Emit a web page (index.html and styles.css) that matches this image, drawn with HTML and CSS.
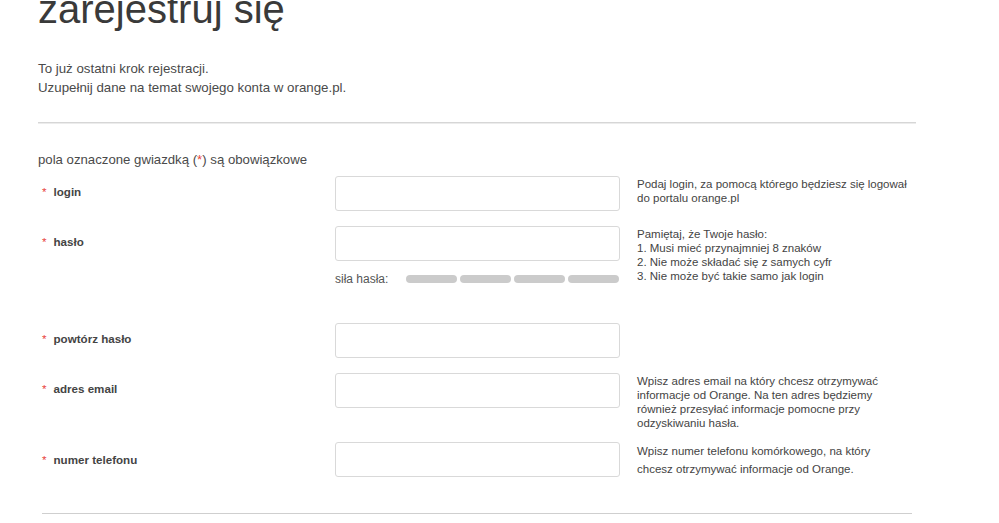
FILE: index.html
```html
<!DOCTYPE html>
<html lang="pl">
<head>
  <meta charset="UTF-8" />
  <meta name="viewport" content="width=device-width,initial-scale=1" />
  <title>Zarejestruj się - orange.pl</title>
  <link rel="stylesheet" href="styles.css">
</head>
<body>
  <div class="container">
    <!-- naglowek -->
    <h1>zarejestruj się</h1>
    <p class="intro">To już ostatni krok rejestracji.<br>Uzupełnij dane na temat swojego konta w orange.pl.</p>
    <hr class="sep">

    <!-- formularz -->
    <form class="reg-form" onsubmit="event.preventDefault();">
      <p class="required-info">pola oznaczone gwiazdką (<span class="star">*</span>) są obowiązkowe</p>

      <div class="row">
        <label class="lbl" for="login"><span class="star">*</span>login</label>
        <div class="field"><input type="text" id="login"></div>
        <div class="help">Podaj login, za pomocą którego będziesz się logował do portalu orange.pl</div>
      </div>

      <div class="row row-pass">
        <label class="lbl" for="pass"><span class="star">*</span>hasło</label>
        <div class="field">
          <input type="password" id="pass">
          <div class="strength">
            <span class="strength-lbl">siła hasła:</span>
            <span class="bars"><i></i><i></i><i></i><i></i></span>
          </div>
        </div>
        <div class="help">Pamiętaj, że Twoje hasło:<br>1. Musi mieć przynajmniej 8 znaków<br>2. Nie może składać się z samych cyfr<br>3. Nie może być takie samo jak login</div>
      </div>

      <div class="row">
        <label class="lbl" for="pass2"><span class="star">*</span>powtórz hasło</label>
        <div class="field"><input type="password" id="pass2"></div>
        <div class="help"></div>
      </div>

      <div class="row row-email">
        <label class="lbl" for="email"><span class="star">*</span>adres email</label>
        <div class="field"><input type="text" id="email"></div>
        <div class="help">Wpisz adres email na który chcesz otrzymywać informacje od Orange. Na ten adres będziemy również przesyłać informacje pomocne przy odzyskiwaniu hasła.</div>
      </div>

      <div class="row row-last">
        <label class="lbl lbl-phone" for="phone"><span class="star">*</span>numer telefonu</label>
        <div class="field"><input type="text" id="phone"></div>
        <div class="help help-tall">Wpisz numer telefonu komórkowego, na który chcesz otrzymywać informacje od Orange.</div>
      </div>
    </form>
    <hr class="sep-bottom">
  </div>
</body>
</html>
```

FILE: styles.css
```css
body { font-family: Arial, 'Liberation Sans', sans-serif; margin: 0; background: #fff; color: #4a4a4a; }
.container { width: 878px; padding-left: 38px; }
h1 { font-size: 40px; font-weight: normal; color: #3a3a3a; margin: -14px 0 0 0; line-height: 46px; }
.intro { font-size: 13.3px; line-height: 19px; margin: 27px 0 0 0; color: #4a4a4a; }
.sep { border: none; border-top: 1px solid #d6d6d6; border-bottom: 1px solid #ececec; margin: 25px 0 0 0; height: 0; }
.required-info { font-size: 13.2px; line-height: 19px; margin: 26px 0 7px 0; }
.star { color: #e8453c; }
.row { display: grid; grid-template-columns: 280px 285px 271px; column-gap: 17px; align-items: start; margin-bottom: 15px; }
.row-pass { margin-bottom: 37px; }
.row-email { margin-bottom: 12px; }
.row-last { margin-bottom: 35px; }
.lbl { font-size: 11.6px; font-weight: bold; line-height: 32px; color: #444; padding-left: 4px; }
.lbl .star { font-weight: normal; margin-right: 7px; }
.lbl-phone { line-height: 36px; }
.field input { display: block; box-sizing: border-box; width: 285px; height: 35px; border: 1px solid #d9d9d9; border-radius: 3px; padding: 4px 8px; font-size: 13px; font-family: inherit; outline: none; }
.strength { display: flex; align-items: center; margin-top: 11px; height: 14px; font-size: 12px; color: #555; }
.strength-lbl { width: 71px; }
.bars { display: flex; gap: 3px; }
.bars i { width: 51px; height: 8px; border-radius: 4px; background: #cbcbcb; }
.help { font-size: 11.5px; line-height: 14px; color: #444; padding-top: 1px; }
.help-tall { line-height: 18px; padding-top: 0; }
.sep-bottom { border: none; border-top: 1px solid #cfcfcf; margin: 0 4px; height: 0; }
```
